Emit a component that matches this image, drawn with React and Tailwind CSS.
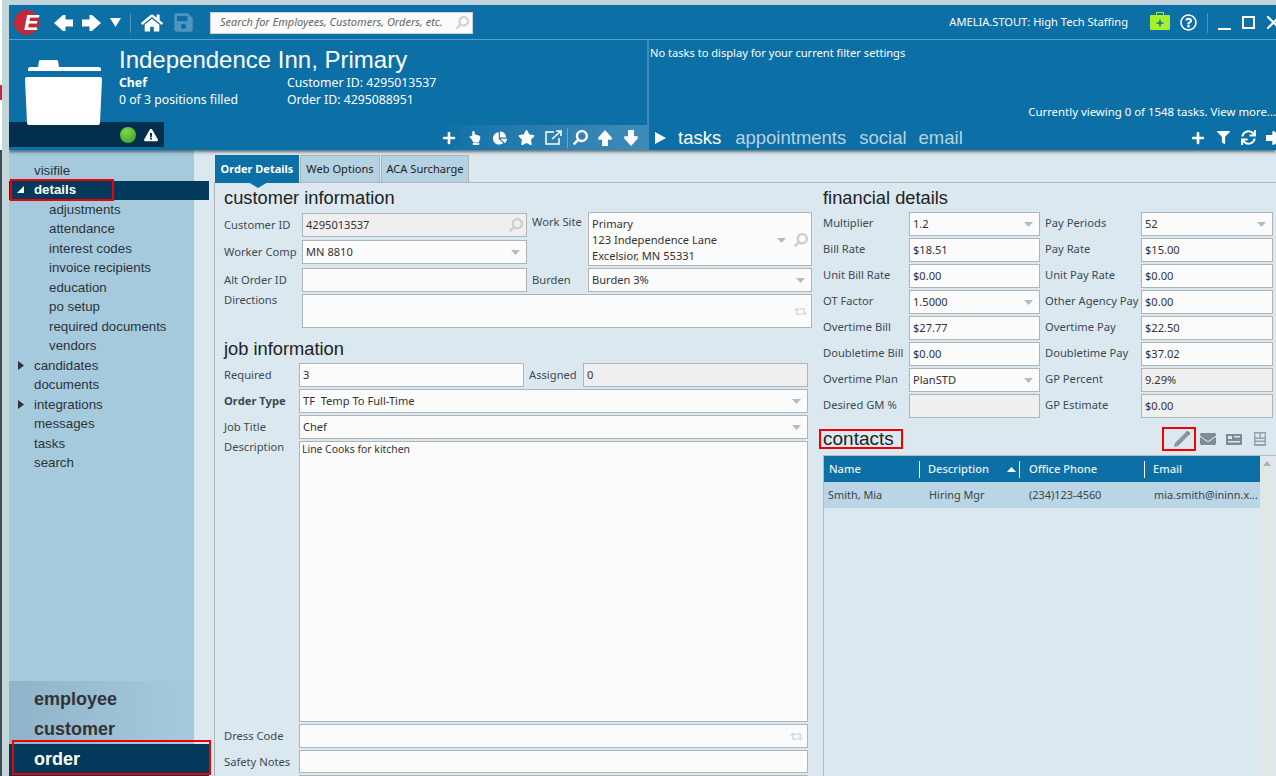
import React from 'react';
import {
    FaChartPie, FaEnvelope, FaExclamationTriangle, FaFilter, FaHandPointUp, FaHome, FaPlus,
    FaRegQuestionCircle, FaRetweet, FaSave, FaSearch, FaStar, FaSync,
} from 'react-icons/fa';

const Caret = () => (
    <svg width="9" height="5" viewBox="0 0 9 5" className="shrink-0"><path d="M0 0h9L4.500 5z" fill="#b5bcc1" /></svg>
);

const Lens = () => <FaSearch className="text-[#c8ced2] text-[14px] shrink-0 -scale-x-100" />;

// chunky arrow used all over the header, points left unless rotated
const BlockArrow = ({ className = '' }) => (
    <svg width="19" height="16" viewBox="0 0 19 16" className={className}>
        <path d="M0 8L9 0h2.500v4.500H19v7h-7.500V16H9z" fill="#fff" />
    </svg>
);

const Box = ({ className = '', disabled, caret, lens, swap, children }) => (
    <div className={`flex items-center justify-between border border-[#aeb4b8] px-[3px] text-[11.1px] text-[#333] ${disabled ? 'bg-[#efefef]' : 'bg-[#fbfbfb]'} ${className}`}>
        <span className="whitespace-nowrap">{children}</span>
        {caret && <span className="mr-[3px]"><Caret /></span>}
        {lens && <Lens />}
        {swap && <FaRetweet className="text-[#d3d8db] text-[13px] mr-[1px]" />}
    </div>
);

const Heading = ({ big, className = '', children }) => (
    <h2 className={`font-['Liberation_Sans',Arial,sans-serif] leading-none text-[#222] ${big ? 'text-[19px]' : 'text-[18.3px]'} ${className}`}>{children}</h2>
);

const FormRow = ({ label, bold, tight, className = '', children }) => (
    <div className={`flex gap-0 ${className}`}>
        <span className={`w-[75px] shrink-0 text-[11.2px] text-[#3d4a52] whitespace-nowrap ${tight ? 'leading-[12px]' : 'pt-[4px]'} ${bold ? 'font-bold' : ''}`}>{label}</span>
        {children}
    </div>
);

const financial = [
    ['Multiplier', '1.2', { caret: true }, 'Pay Periods', '52', { caret: true }],
    ['Bill Rate', '$18.51', {}, 'Pay Rate', '$15.00', {}],
    ['Unit Bill Rate', '$0.00', {}, 'Unit Pay Rate', '$0.00', {}],
    ['OT Factor', '1.5000', { caret: true }, 'Other Agency Pay', '$0.00', {}],
    ['Overtime Bill', '$27.77', {}, 'Overtime Pay', '$22.50', {}],
    ['Doubletime Bill', '$0.00', {}, 'Doubletime Pay', '$37.02', {}],
    ['Overtime Plan', 'PlanSTD', { caret: true }, 'GP Percent', '9.29%', { disabled: true }],
    ['Desired GM %', '', { disabled: true }, 'GP Estimate', '$0.00', { disabled: true }],
];

const navItems = [
    { label: 'visifile' },
    { label: 'details', active: true },
    { label: 'adjustments', sub: true },
    { label: 'attendance', sub: true },
    { label: 'interest codes', sub: true },
    { label: 'invoice recipients', sub: true },
    { label: 'education', sub: true },
    { label: 'po setup', sub: true },
    { label: 'required documents', sub: true },
    { label: 'vendors', sub: true },
    { label: 'candidates', arrow: true },
    { label: 'documents' },
    { label: 'integrations', arrow: true },
    { label: 'messages' },
    { label: 'tasks' },
    { label: 'search' },
];

const Sidebar = () => (
    <aside className="relative z-10 flex w-[185px] shrink-0 flex-col justify-between bg-[#a6cadd] font-['Liberation_Sans',Arial,sans-serif]">
        <nav className="pt-[11px]">
            {navItems.map((item) => (
                <div
                    key={item.label}
                    className={`relative flex h-[19.5px] items-center text-[13.3px] ${item.sub ? 'pl-[40px]' : 'pl-[25px]'} ${item.active ? 'w-[200px] bg-[#03395a] font-bold text-white' : 'text-[#2b3338]'}`}
                >
                    {item.active && (
                        <>
                            <svg width="7" height="7" viewBox="0 0 7 7" className="absolute left-[8px] top-[5px]"><path d="M7 0v7H0z" fill="#fff" /></svg>
                            <span className="absolute left-[1px] -top-[2px] h-[22px] w-[104px] border-2 border-[#f00000]" />
                        </>
                    )}
                    {item.arrow && (
                        <svg width="6" height="9" viewBox="0 0 6 9" className="absolute left-[9px] top-[5px]"><path d="M0 0l6 4.500L0 9z" fill="#2b3338" /></svg>
                    )}
                    {item.label}
                </div>
            ))}
        </nav>
        <div className="bg-gradient-to-r from-[#8fb3c9] to-[#a6cadd] pt-[3px] text-[18px] font-bold text-[#333]">
            <div className="flex h-[30px] items-center pl-[25px]">employee</div>
            <div className="flex h-[30px] items-center pl-[25px]">customer</div>
            <div className="relative flex h-[32px] w-[200px] items-center bg-[#03395a] pb-[2px] pl-[25px] text-white">
                order
                <span className="absolute left-[3px] -top-[4px] h-[35px] w-[199px] border-2 border-[#f00000]" />
            </div>
        </div>
    </aside>
);

const Header = () => (
    <header className="relative z-20 flex h-[145px] shrink-0 flex-col bg-[#0c6fa5] text-white shadow-[0_2px_3px_rgba(40,60,70,0.7)]">
        <div className="flex h-[35px] shrink-0 items-center border-b border-[#5a9dc5] pl-[5px] pt-[1px]">
            <div className="flex h-[25px] w-[25px] shrink-0 items-center rounded-full bg-[#c42a35] pl-[10px]">
                <span className="font-['Liberation_Sans',Arial,sans-serif] text-[22px] font-bold italic leading-none">E</span>
            </div>
            <BlockArrow className="ml-[15px]" />
            <BlockArrow className="ml-[9px] rotate-180" />
            <svg width="11" height="9" viewBox="0 0 11 9" className="ml-[9px]"><path d="M0 0h11L5.500 9z" fill="#fff" /></svg>
            <span className="ml-[9px] h-[20px] w-px bg-[#4d93bd]" />
            <FaHome className="ml-[10px] text-[22px]" />
            <FaSave className="ml-[10px] text-[21px] text-[#4f95bf]" />
            <div className="ml-[16px] flex h-[22px] w-[263px] items-center justify-between border border-[#c9d3d8] bg-[#fbfbfb] pl-[9px] pr-[3px] text-[11px] italic text-[#666]">
                <span className="whitespace-nowrap">Search for Employees, Customers, Orders, etc.</span>
                <FaSearch className="-scale-x-100 text-[13px] text-[#ccd2d6]" />
            </div>
            <span className="ml-auto text-[11.1px]">AMELIA.STOUT: High Tech Staffing</span>
            <div className="relative ml-[22px] h-[15px] w-[20px] rounded-[1px] bg-[#a4f02a]">
                <span className="absolute -top-[3px] left-[6px] h-[4px] w-[8px] rounded-t-[1px] border border-b-0 border-[#a4f02a]" />
                <FaPlus className="absolute left-[6px] top-[4px] text-[8px] text-[#0c6fa5]" />
            </div>
            <FaRegQuestionCircle className="ml-[10px] text-[17px]" />
            <span className="ml-[10px] h-[20px] w-px bg-[#4d93bd]" />
            <span className="ml-[10px] mt-[12px] h-[2px] w-[13px] bg-white" />
            <span className="ml-[11px] h-[13px] w-[13px] border-2 border-white" />
            <svg width="9" height="13" viewBox="0 0 9 13" className="ml-[12px]"><path d="M0 0l13 13M13 0L0 13" stroke="#fff" strokeWidth="2" /></svg>
        </div>
        <div className="flex min-h-0 flex-1">
            <section className="relative flex w-[640px] shrink-0 border-r-2 border-[#3e8bb8]">
                <div className="relative w-[110px] shrink-0">
                    <div className="absolute bottom-[3px] left-0 flex h-[25px] w-[155px] items-center justify-end gap-[8px] bg-[#032f4d] pr-[6px]">
                        <span className="h-[16px] w-[16px] rounded-full bg-[radial-gradient(circle_at_40%_30%,#7fd64e,#2e9d1f)]" />
                        <FaExclamationTriangle className="text-[14px]" />
                    </div>
                    <svg width="78" height="65" viewBox="0 0 78 65" className="absolute left-[16px] top-[20px]">
                        <path d="M13 7l1-6q0-1 2-1h15q2 0 2 1l1 6h39q3 0 3 2v2H3V9q0-2 3-2z" fill="#fff" />
                        <path d="M0 19q0-2 2-2h73q2 0 2 2l-2 44q0 2-2 2H4q-2 0-2-2z" fill="#fff" />
                    </svg>
                </div>
                <div className="pt-[2px]">
                    <h1 className="h-[36px] font-['Liberation_Sans',Arial,sans-serif] text-[24px] leading-[36px]">Independence Inn, Primary</h1>
                    <div className="-mt-[4px] flex text-[12.25px] leading-[17px]">
                        <div className="w-[168px]">
                            <div className="font-bold">Chef</div>
                            <div>0 of 3 positions filled</div>
                        </div>
                        <div>
                            <div>Customer ID: 4295013537</div>
                            <div>Order ID: 4295088951</div>
                        </div>
                    </div>
                </div>
                <div className="absolute bottom-0 right-0 flex h-[25px] items-center bg-gradient-to-r from-[#0c6fa5] to-[#3e8bb8] pl-[10px] pr-[8px]">
                    <FaPlus className="text-[14px]" />
                    <FaHandPointUp className="ml-[12px] text-[14px]" />
                    <FaChartPie className="ml-[11px] text-[14px]" />
                    <FaStar className="ml-[11px] text-[17px]" />
                    <svg width="17" height="15" viewBox="0 0 17 15" fill="none" stroke="#fff" strokeWidth="1.5" className="ml-[10px]">
                        <path d="M9 2H1v12h13V8" />
                        <path d="M7 9l8-7M11 1h5v5" />
                    </svg>
                    <span className="ml-[5px] h-[20px] w-px bg-[#6aa6ca]" />
                    <FaSearch className="ml-[5px] -scale-x-100 text-[15px]" />
                    <BlockArrow className="ml-[9px] h-[14px] w-[16px] rotate-90" />
                    <BlockArrow className="ml-[10px] h-[14px] w-[16px] -rotate-90" />
                </div>
            </section>
            <section className="relative min-w-0 flex-1">
                <p className="pl-[1px] pt-[4px] text-[11.1px] leading-[17px]">No tasks to display for your current filter settings</p>
                <p className="absolute right-0 top-[63px] whitespace-nowrap text-[11.4px] leading-[17px]">Currently viewing 0 of 1548 tasks. View more...</p>
                <div className="absolute inset-x-0 bottom-0 flex h-[25px] items-center font-['Liberation_Sans',Arial,sans-serif] text-[18.5px] text-[#b8d2e2]">
                    <svg width="11" height="12" viewBox="0 0 11 12" className="ml-[6px]"><path d="M0 0l11 6-11 6z" fill="#fff" /></svg>
                    <span className="ml-[12px] text-white">tasks</span>
                    <span className="ml-[14px]">appointments</span>
                    <span className="ml-[13px]">social</span>
                    <span className="ml-[12px]">email</span>
                    <FaPlus className="ml-auto text-[14px] text-white" />
                    <FaFilter className="ml-[12px] text-[13px] text-white" />
                    <FaSync className="ml-[11px] text-[15px] text-white" />
                    <BlockArrow className="-mr-[6px] ml-[10px] h-[14px] w-[16px] rotate-180" />
                </div>
            </section>
        </div>
    </header>
);

const Tabs = () => (
    <div className="flex h-[33px] shrink-0 border-b border-[#aeb4b8] pl-[1px] pt-[5px] text-[11.1px]">
        <div className="relative flex h-[28px] w-[84px] items-center justify-center bg-[#0c6fa5] text-[11px] font-bold text-white">
            Order Details
            <svg width="20" height="6" viewBox="0 0 20 6" className="absolute left-[33px] top-[27px]"><path d="M0 0h20L10 6z" fill="#0c6fa5" /></svg>
        </div>
        <div className="ml-[1px] flex h-[27px] w-[80px] items-center justify-center self-end border border-b-0 border-[#aeb4b8] bg-[#b5d2e3] text-[#222]">Web Options</div>
        <div className="ml-[1px] flex h-[27px] w-[88px] items-center justify-center self-end border border-b-0 border-[#aeb4b8] bg-[#b5d2e3] text-[#222]">ACA Surcharge</div>
    </div>
);

const LeftColumn = () => (
    <div className="w-[601px] shrink-0 overflow-hidden border-l border-[#aeb4b8] pl-[9px]">
        <Heading className="flex h-[29px] items-center pt-[2px]">customer information</Heading>
        <div className="flex gap-[5px]">
            <div className="w-[303px]">
                <div className="mt-[1px] flex h-[24px] items-center">
                    <span className="w-[78px] shrink-0 text-[11.2px] text-[#3d4a52]">Customer ID</span>
                    <Box className="h-full flex-1" disabled lens>4295013537</Box>
                </div>
                <div className="mt-[3px] flex h-[24px] items-center">
                    <span className="w-[78px] shrink-0 text-[11.2px] text-[#3d4a52]">Worker Comp</span>
                    <Box className="h-full flex-1 pt-[1px]" caret>MN 8810</Box>
                </div>
                <div className="mt-[4px] flex h-[24px] items-center">
                    <span className="w-[78px] shrink-0 text-[11.2px] text-[#3d4a52]">Alt Order ID</span>
                    <Box className="h-full flex-1" />
                </div>
            </div>
            <div className="w-[280px]">
                <div className="flex">
                    <span className="w-[56px] shrink-0 pt-[2px] text-[11.2px] text-[#3d4a52] whitespace-nowrap">Work Site</span>
                    <div className="flex h-[54px] flex-1 items-center border border-[#aeb4b8] bg-[#fbfbfb] px-[3px] pt-[2px] text-[11.1px] leading-[16px] text-[#333]">
                        <div className="flex-1 whitespace-nowrap">
                            <div>Primary</div>
                            <div>123 Independence Lane</div>
                            <div>Excelsior, MN 55331</div>
                        </div>
                        <span className="mr-[8px]"><Caret /></span>
                        <Lens />
                    </div>
                </div>
                <div className="mt-[2px] flex h-[24px] items-center">
                    <span className="w-[56px] shrink-0 text-[11.2px] text-[#3d4a52]">Burden</span>
                    <Box className="h-full flex-1 pt-[1px]" caret>Burden 3%</Box>
                </div>
            </div>
        </div>
        <div className="mt-[2px] flex h-[34px]">
            <span className="w-[78px] shrink-0 text-[11.2px] leading-[12px] text-[#3d4a52]">Directions</span>
            <Box className="h-full w-[510px]" swap />
        </div>
        <Heading className="mt-[6px] flex h-[29px] items-center pt-[2px]">job information</Heading>
        <div className="flex flex-col gap-[2px]">
            <FormRow label="Required" className="h-[24px]">
                <Box className="h-full w-[225px]">3</Box>
                <span className="w-[59px] shrink-0 pl-[5px] pt-[4px] text-[11.2px] text-[#3d4a52]">Assigned</span>
                <Box className="h-full w-[225px]" disabled>0</Box>
            </FormRow>
            <FormRow label="Order Type" bold className="h-[24px]">
                <Box className="h-full w-[509px]" caret>TF&nbsp; Temp To Full-Time</Box>
            </FormRow>
            <FormRow label="Job Title" className="h-[24px]">
                <Box className="h-full w-[509px]" caret>Chef</Box>
            </FormRow>
            <FormRow label="Description" tight className="h-[281px]">
                <div className="h-full w-[509px] border border-[#aeb4b8] bg-[#fbfbfb] px-[2px] text-[10.4px] text-[#333]">Line Cooks for kitchen</div>
            </FormRow>
            <FormRow label="Dress Code" className="h-[24px]">
                <Box className="h-full w-[509px]" swap />
            </FormRow>
            <FormRow label="Safety Notes" className="h-[23px]">
                <Box className="h-full w-[509px]" />
            </FormRow>
            <FormRow label="" className="h-[24px] shrink-0">
                <Box className="h-full w-[509px]" />
            </FormRow>
        </div>
    </div>
);

const RightColumn = () => (
    <div className="flex min-w-0 flex-1 flex-col pl-[8px]">
        <Heading className="flex h-[29px] shrink-0 items-center pt-[2px]">financial details</Heading>
        <div className="flex flex-col gap-[2px]">
            {financial.map(([label, value, props, label2, value2, props2]) => (
                <div key={label} className="flex h-[24px] items-center text-[11.2px] text-[#3d4a52]">
                    <span className="w-[86px] shrink-0 pb-[2px] whitespace-nowrap">{label}</span>
                    <Box className="h-full w-[131px]" {...props}>{value}</Box>
                    <span className="w-[101px] shrink-0 pb-[2px] pl-[5px] whitespace-nowrap">{label2}</span>
                    <Box className="h-full w-[132px]" {...props2}>{value2}</Box>
                </div>
            ))}
        </div>
        <div className="mt-[9px] flex h-[24px] shrink-0 items-center">
            <Heading big className="relative -mt-[2px]">
                contacts
                <span className="absolute -left-[4px] top-0 h-[20px] w-[84px] border-2 border-[#f00000]" />
            </Heading>
            <div className="relative ml-auto mr-[10px] flex items-center text-[#7f8b92]">
                <svg width="16" height="16" viewBox="0 0 16 16" className="mr-[10px]">
                    <path d="M0 16l1-4L12 1l3 3L4 15z" fill="#8a969d" />
                    <path d="M12.500.5q1-1 2 0l1 1q1 1 0 2L15 4 12 1z" fill="#6f7b82" />
                </svg>
                <FaEnvelope className="mr-[10px] text-[16px]" />
                <svg width="16" height="11" viewBox="0 0 16 11" className="mr-[12px]">
                    <path d="M0 0h16v11H0z" fill="#7f8b92" />
                    <path d="M2 2h4v3H2zM8 2h6v1.500H8zM2 7h12v1.500H2z" fill="#dbe8f0" />
                </svg>
                <svg width="12" height="14" viewBox="0 0 12 14">
                    <path d="M0 0h12v14H0z" fill="#98a3a9" />
                    <path d="M1.500 1.500h4v4h-4zM7 1.500h3.500v4H7zM1.500 7h9v1.500h-9zM1.500 10h9v2h-9z" fill="#dbe8f0" />
                </svg>
                <span className="absolute -top-[4px] -left-[12px] h-[24px] w-[34px] border-2 border-[#f00000]" />
            </div>
        </div>
        <div className="mt-[4px] flex min-h-0 flex-1 border-l border-t border-[#b5bbbf] text-[11.1px]">
            <div className="w-[436px] shrink-0">
                <div className="flex h-[26px] items-center bg-[#0c6fa5] font-medium text-[#e9f2f7]">
                    <div className="flex h-[17px] w-[96px] items-center border-r border-white pl-[5px]">Name</div>
                    <div className="flex h-[17px] w-[100px] items-center justify-between border-r border-white pl-[8px] pr-[3px]">
                        Description
                        <svg width="9" height="5" viewBox="0 0 9 5"><path d="M0 5h9L4.500 0z" fill="#fff" /></svg>
                    </div>
                    <div className="flex h-[17px] w-[125px] items-center border-r border-white pl-[9px]">Office Phone</div>
                    <div className="pl-[8px]">Email</div>
                </div>
                <div className="flex h-[26px] items-center bg-[#bad5e5] text-[10.9px] text-[#3a444a]">
                    <div className="w-[96px] pl-[4px]">Smith, Mia</div>
                    <div className="w-[100px] pl-[9px]">Hiring Mgr</div>
                    <div className="w-[125px] pl-[9px]">(234)123-4560</div>
                    <div className="pl-[9px] whitespace-nowrap">mia.smith@ininn.x...</div>
                </div>
            </div>
            <div className="w-[13px] shrink-0 bg-[#e1e6e9] pl-[3px] pt-[5px]">
                <svg width="8" height="5" viewBox="0 0 8 5" className="block"><path d="M0 5h8L4 0z" fill="#a9b1b6" /></svg>
            </div>
        </div>
    </div>
);

const App = () => (
    <div className="flex h-[776px] w-[1276px] overflow-hidden bg-[#c3d5dc] font-['Noto_Sans','Open_Sans',sans-serif]">
        <div className="relative z-30 w-[9px] shrink-0 bg-[#c5d6d9]">
            <div className="absolute left-0 top-0 h-[150px] w-[2px] bg-white" />
            <div className="absolute left-0 top-[85px] h-[15px] w-[2px] bg-[#c42a35]" />
            <div className="absolute bottom-0 left-0 top-[150px] w-[2px] bg-[#3c4a55]" />
        </div>
        <div className="flex min-w-0 flex-1 flex-col pt-[5px]">
            <Header />
            <div className="flex min-h-0 flex-1">
                <Sidebar />
                <main className="flex min-w-0 flex-1 flex-col bg-[#dbe8f0] pl-[20px]">
                    <Tabs />
                    <div className="flex min-h-0 flex-1">
                        <LeftColumn />
                        <RightColumn />
                    </div>
                </main>
            </div>
        </div>
    </div>
);

export default App;
